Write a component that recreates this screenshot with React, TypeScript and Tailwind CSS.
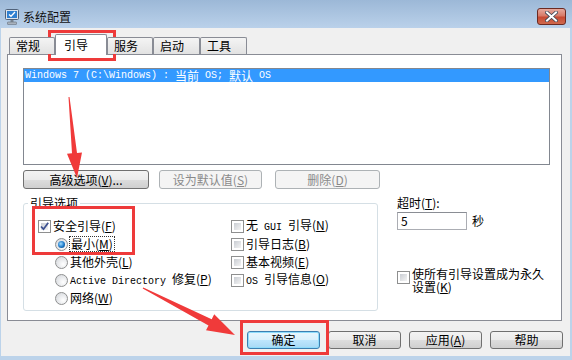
import type { ReactNode } from "react";

function Mn({ c }: { c: string }) {
    return (
        <span>
            (<span className="underline underline-offset-1">{c}</span>)
        </span>
    );
}

function Asc({ children }: { children: ReactNode }) {
    return <span className="font-['Liberation_Mono',monospace] text-[10px] whitespace-pre">{children}</span>;
}

function Check({ checked }: { checked?: boolean }) {
    return (
        <span className="relative flex w-[13px] h-[13px] shrink-0 border border-[#8e8f8f] bg-white p-[2px]">
            <span className="flex-1 bg-[linear-gradient(135deg,#c9cdd3,#f4f4f4)]" />
            {checked && (
                <svg className="absolute left-[0px] top-[0px]" width="11" height="11" viewBox="0 0 11 11">
                    <path d="M2 5.5 L4.5 8.2 L9.2 1.8" fill="none" stroke="#3d5190" strokeWidth="1.8" />
                </svg>
            )}
        </span>
    );
}

function Radio({ checked }: { checked?: boolean }) {
    return (
        <span className="flex w-[13px] h-[13px] shrink-0 items-center justify-center rounded-full border border-[#8e8f8f] bg-[radial-gradient(circle_at_65%_65%,#ffffff,#d0d3d8)]">
            {checked && (
                <span className="w-[7px] h-[7px] rounded-full bg-[radial-gradient(circle_at_40%_40%,#9fdcff,#1b78c8_55%,#0b3766)]" />
            )}
        </span>
    );
}

function Btn({ children, className, disabled, primary }: { children: ReactNode; className: string; disabled?: boolean; primary?: boolean }) {
    let look = "border-[#707070] bg-[linear-gradient(#f3f3f3_0%,#ebebeb_50%,#dddddd_50%,#cfcfcf_100%)] text-black";
    if (disabled) look = "border-[#adb2b5] bg-[#f4f4f4] text-[#8a8a8a]";
    if (primary) look = "border-[#3c7fb1] bg-[linear-gradient(#eaf6fd_0%,#d9f0fc_50%,#bee6fd_50%,#a7d9f5_100%)] shadow-[inset_0_0_0_1px_#8fdcfb] text-black";
    return (
        <div className={`flex items-center justify-center rounded-[3px] border ${look} ${className}`}>
            {children}
        </div>
    );
}

function Tab({ label, selected, className }: { label: string; selected?: boolean; className: string }) {
    if (selected) {
        return (
            <div className={`h-[21px] -mb-px border border-b-0 border-[#898c95] bg-white rounded-t-[2px] pl-[8px] pt-[4px] ${className}`}>
                {label}
            </div>
        );
    }
    return (
        <div className={`h-[17px] flex items-center border border-b-0 border-[#898c95] rounded-t-[2px] bg-[linear-gradient(#f4f4f4,#e2e2e2)] pl-[6px] ${className}`}>
            {label}
        </div>
    );
}

export default function App() {
    return (
        <div className="relative w-[572px] h-[360px] overflow-hidden flex flex-col bg-[#bcd3ea] font-['Noto_Sans_CJK_SC','Noto_Sans',sans-serif] text-[12px] leading-[12px] text-black">
            {/* title bar */}
            <div className="h-[28px] shrink-0 flex bg-[linear-gradient(#9cb8d7,#bad1ea)]">
                <svg className="ml-[5px] mt-[9px]" width="14" height="16" viewBox="0 0 14 16">
                    <rect x="0.5" y="0.5" width="13" height="10" rx="1" fill="#dfe5ec" stroke="#50627a" />
                    <rect x="2" y="2" width="10" height="7" fill="#2f7fd0" />
                    <path d="M4 5.5 L6 7.3 L10 3" fill="none" stroke="#ffffff" strokeWidth="1.3" />
                    <rect x="5.5" y="11" width="3" height="2" fill="#7a8592" />
                    <rect x="2.5" y="13" width="9" height="2.5" rx="0.5" fill="#a9b2bd" stroke="#66717e" strokeWidth="0.6" />
                </svg>
                <span className="ml-[4px] mt-[11px] text-[#111]">系统配置</span>
                <div className="ml-auto mr-[6px] mt-[8px] w-[29px] h-[17px] rounded-[3px] border border-[#6b2a22] bg-[linear-gradient(#e6a99e_0%,#d77a68_45%,#c74a34_55%,#cf6a4e_100%)] flex items-center justify-center">
                    <svg width="13" height="11" viewBox="0 0 13 11">
                        <path d="M2 1.5 L11 9.5 M11 1.5 L2 9.5" stroke="#3b4656" strokeWidth="3.6" strokeLinecap="square" />
                        <path d="M2 1.5 L11 9.5 M11 1.5 L2 9.5" stroke="#ffffff" strokeWidth="2" strokeLinecap="square" />
                    </svg>
                </div>
            </div>

            {/* client area */}
            <div className="ml-[1px] mr-[2px] h-[328px] bg-[#f0f0f0] flex flex-col">
                <div className="ml-[6px] mt-[6px] w-[555px] flex flex-col">
                    <div className="relative z-10 h-[20px] flex items-end pl-[2px]">
                        <Tab label="常规" className="w-[46px]" />
                        <Tab label="引导" selected className="w-[52px]" />
                        <Tab label="服务" className="w-[46px]" />
                        <Tab label="启动" className="w-[47px]" />
                        <Tab label="工具" className="w-[47px]" />
                    </div>

                    <div className="h-[267px] border border-[#898c95] bg-white flex flex-col pl-[15px] pt-[13px]">
                        {/* boot list */}
                        <div className="w-[527px] h-[97px] shrink-0 border border-[#828790] bg-white">
                            <div className="h-[13px] bg-[#3399ff] text-white flex items-center pl-[1px] whitespace-pre">
                                <Asc>{"Windows 7 (C:\\Windows) : "}</Asc>
                                <span>当前</span>
                                <Asc>{" OS; "}</Asc>
                                <span>默认</span>
                                <Asc>{" OS"}</Asc>
                            </div>
                        </div>

                        <div className="mt-[5px] flex">
                            <Btn className="w-[126px] h-[19px]">
                                高级选项<Mn c="V" />...
                            </Btn>
                            <Btn disabled className="ml-[10px] w-[103px] h-[19px]">
                                设为默认值<Mn c="S" />
                            </Btn>
                            <Btn disabled className="ml-[13px] w-[105px] h-[19px]">
                                删除<Mn c="D" />
                            </Btn>
                        </div>

                        <div className="mt-[8px] flex items-start">
                            <fieldset className="w-[355px] h-[114px] border border-[#d5dfe5] rounded-[3px]">
                                <legend className="ml-[4px] px-[2px] leading-[12px]">引导选项</legend>
                                <div className="pl-[14px] pt-[8px] flex">
                                    <div className="w-[193px] flex flex-col">
                                        <div className="h-[18px] flex items-center">
                                            <Check checked />
                                            <span className="ml-[2px]">安全引导<Mn c="F" /></span>
                                        </div>
                                        <div className="h-[18px] flex items-center pl-[17px]">
                                            <Radio checked />
                                            <span className="ml-[1px] px-[1px] py-[1px] border border-dotted border-[#333]">最小<Mn c="M" /></span>
                                        </div>
                                        <div className="h-[18px] flex items-center pl-[17px]">
                                            <Radio />
                                            <span className="ml-[2px]">其他外壳<Mn c="L" /></span>
                                        </div>
                                        <div className="h-[18px] flex items-center pl-[17px]">
                                            <Radio />
                                            <span className="ml-[2px] whitespace-pre">
                                                <Asc>{"Active Directory "}</Asc>修复<Mn c="P" />
                                            </span>
                                        </div>
                                        <div className="h-[18px] flex items-center pl-[17px]">
                                            <Radio />
                                            <span className="ml-[2px]">网络<Mn c="W" /></span>
                                        </div>
                                    </div>
                                    <div className="flex flex-col">
                                        <div className="h-[18px] flex items-center">
                                            <Check />
                                            <span className="ml-[2px] whitespace-pre">
                                                无<Asc>{" GUI "}</Asc>引导<Mn c="N" />
                                            </span>
                                        </div>
                                        <div className="h-[18px] flex items-center">
                                            <Check />
                                            <span className="ml-[2px]">引导日志<Mn c="B" /></span>
                                        </div>
                                        <div className="h-[18px] flex items-center">
                                            <Check />
                                            <span className="ml-[2px]">基本视频<Mn c="E" /></span>
                                        </div>
                                        <div className="h-[18px] flex items-center">
                                            <Check />
                                            <span className="ml-[2px] whitespace-pre">
                                                <Asc>{"OS "}</Asc>引导信息<Mn c="O" />
                                            </span>
                                        </div>
                                    </div>
                                </div>
                            </fieldset>

                            <div className="ml-[19px] flex flex-col">
                                <span>超时<Mn c="T" />:</span>
                                <div className="mt-[3px] flex items-center">
                                    <div className="w-[70px] h-[18px] border border-[#abadb3] border-t-[#8a8d94] bg-white flex items-center pl-[3px]">5</div>
                                    <span className="ml-[5px]">秒</span>
                                </div>
                                <div className="mt-[37px] flex items-start">
                                    <span className="mt-[4px]">
                                        <Check />
                                    </span>
                                    <span className="ml-[2px] w-[136px] leading-[13px]">
                                        使所有引导设置成为永久设置<Mn c="K" />
                                    </span>
                                </div>
                            </div>
                        </div>
                    </div>
                </div>

                <div className="mt-[10px] flex justify-end gap-[8px] pr-[7px]">
                    <Btn primary className="w-[73px] h-[18px]">确定</Btn>
                    <Btn className="w-[73px] h-[18px]">取消</Btn>
                    <Btn className="w-[73px] h-[18px]">应用<Mn c="A" /></Btn>
                    <Btn className="w-[73px] h-[18px]">帮助</Btn>
                </div>
            </div>

            {/* annotations */}
            <div className="absolute left-[48px] top-[30px] w-[68px] h-[31px] border-[3px] border-[#ee3a3a]" />
            <div className="absolute left-[32px] top-[206px] w-[103px] h-[49px] border-[3px] border-[#ee3a3a]" />
            <div className="absolute left-[240px] top-[320px] w-[89px] h-[35px] border-[3px] border-[#ee3a3a]" />
            <svg className="absolute left-0 top-0 pointer-events-none" width="572" height="360" viewBox="0 0 572 360">
                <polygon points="68.5,97.1 69.5,97 77,152.9 82,152.4 77,178 67,153.8 72,153.3" fill="#f03a3a" />
                <polygon points="143.3,287.4 211.7,319.2 214.2,314.3 235,335 206,330.3 208.5,325.4 142.7,288.6" fill="#f03a3a" />
            </svg>
        </div>
    );
}
